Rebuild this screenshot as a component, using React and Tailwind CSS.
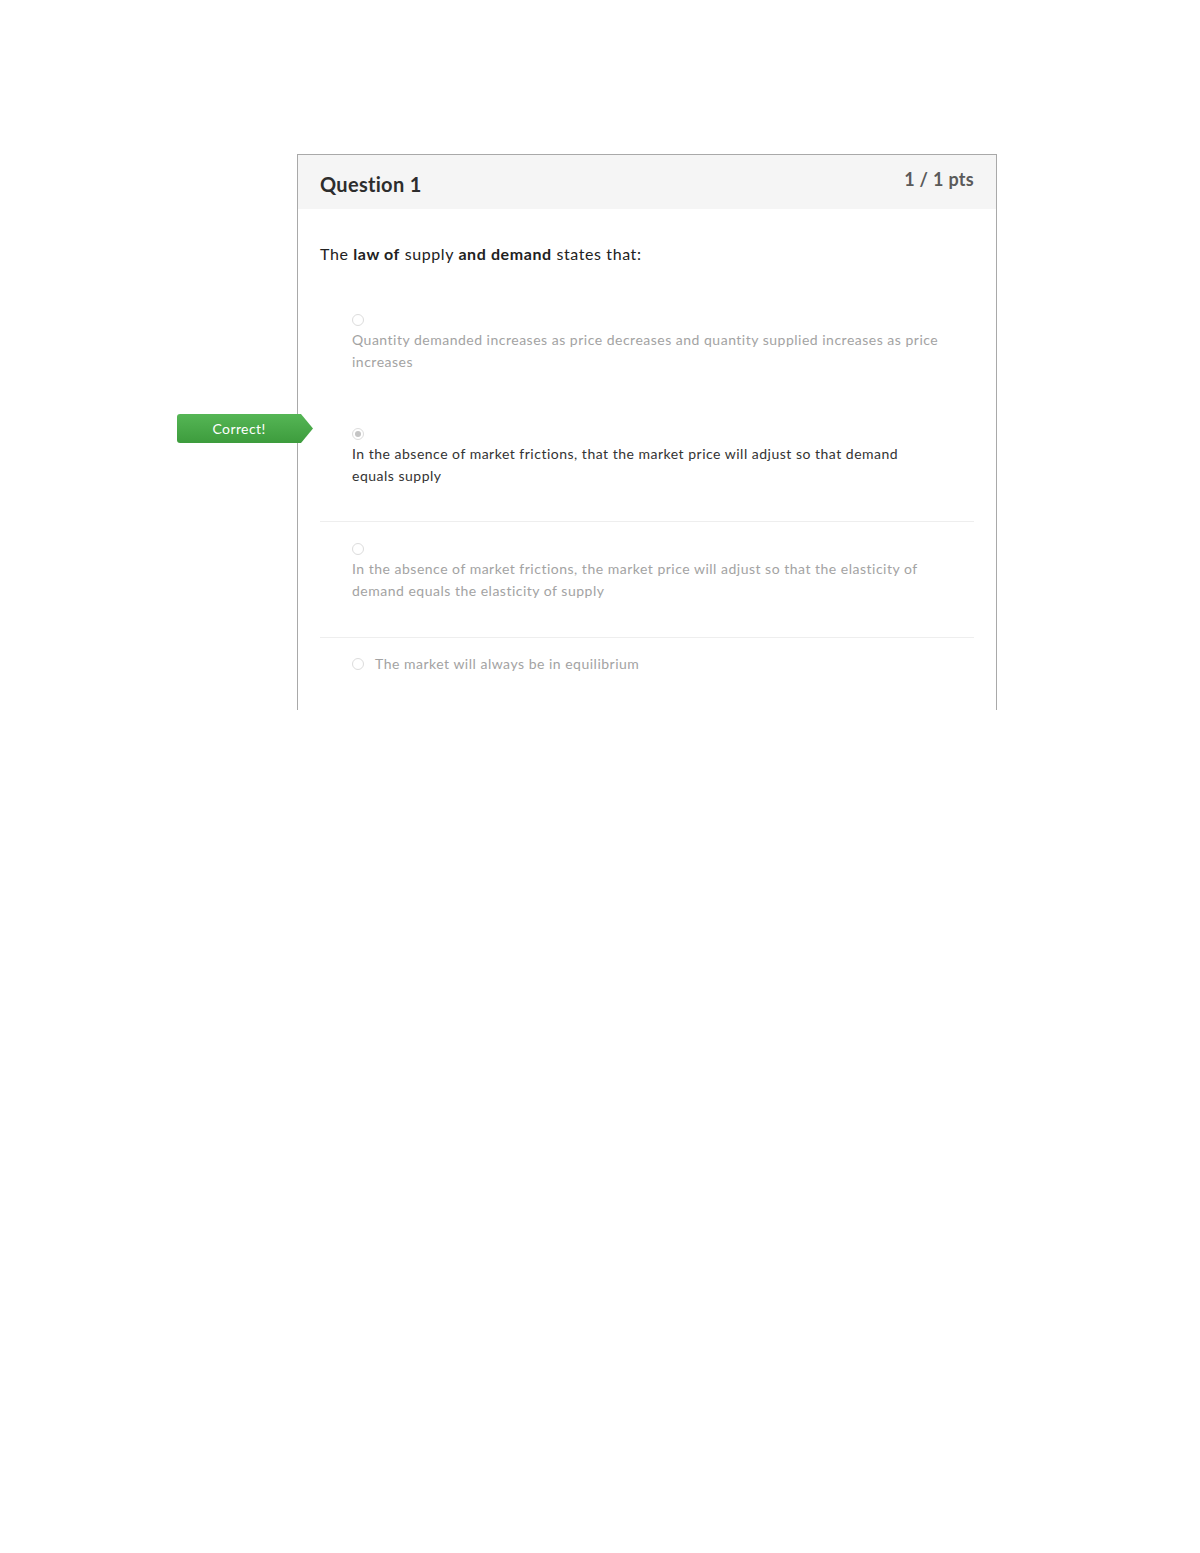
function Radio({ checked }) {
  return (
    <span className="inline-flex h-3 w-3 shrink-0 items-center justify-center rounded-full border border-[#dcdcdc] bg-white">
      {checked && <span className="h-[6px] w-[6px] rounded-full bg-[#c4c4c4]" />}
    </span>
  );
}

/* ── Answer option block ── */
function Answer({ text, selected, divider, pb, children }) {
  return (
    <div
      className={
        "relative pl-8 pr-[33px] pt-[21px] border-t " +
        pb +
        " " +
        (divider ? "border-[#eeeeee]" : "border-transparent")
      }
    >
      {children}
      <div className="flex h-3 items-center">
        <Radio checked={selected} />
      </div>
      <p
        className={
          "mt-[3px] text-[14px] leading-[22px] tracking-[0.5px] " +
          (selected ? "text-[#333333]" : "text-[#a3a3a3]")
        }
      >
        {text}
      </p>
    </div>
  );
}

export default function App() {
  return (
    <div
      className="min-h-[1553px] bg-white pt-[154px] pl-[297px]"
      style={{ fontFamily: "Lato, 'Noto Sans', 'Liberation Sans', sans-serif" }}
    >
      <div className="h-[556px] w-[700px] border-x border-t border-[#a9a9a9]">
        {/* Header */}
        <div className="flex h-[54px] items-start justify-between bg-[#f5f5f5] px-[22px]">
          <h2 className="mt-[15px] text-[20px] font-bold leading-[28px] tracking-[0.3px] text-[#2d2d2d]">
            Question 1
          </h2>
          <span className="mt-[12px] text-[18px] font-bold leading-[24px] tracking-[0.3px] text-[#5a5a5a]">
            1 / 1 pts
          </span>
        </div>

        <div className="px-[22px]">
          {/* Prompt */}
          <p className="mt-[34px] text-[16px] leading-[22px] tracking-[0.6px] text-[#222222]">
            The <strong className="font-bold">law of</strong> supply{" "}
            <strong className="font-bold">and demand</strong> states that:
          </p>

          {/* Options */}
          <div className="mt-[27px]">
            <Answer
              pb="pb-[33px]"
              text="Quantity demanded increases as price decreases and quantity supplied increases as price increases"
            />
            <Answer
              selected
              pb="pb-[34px]"
              text="In the absence of market frictions, that the market price will adjust so that demand equals supply"
            >
              <div
                className="absolute left-[-143px] top-[7px] flex h-[29px] w-[136px] items-center bg-gradient-to-b from-[#55b655] to-[#3d9c3d]"
                style={{
                  clipPath: "polygon(0 0, 124px 0, 136px 50%, 124px 100%, 0 100%)",
                  borderRadius: "3px 0 0 3px",
                }}
              >
                <span className="w-[124px] text-center text-[14px] tracking-[0.4px] text-white">
                  Correct!
                </span>
              </div>
            </Answer>
            <Answer
              divider
              pb="pb-[35px]"
              text="In the absence of market frictions, the market price will adjust so that the elasticity of demand equals the elasticity of supply"
            />
            <div className="flex items-center gap-[11px] border-t border-[#eeeeee] pl-8 pt-[15px]">
              <Radio />
              <span className="text-[14px] leading-[22px] tracking-[0.5px] text-[#a3a3a3]">
                The market will always be in equilibrium
              </span>
            </div>
          </div>
        </div>
      </div>
    </div>
  );
}
